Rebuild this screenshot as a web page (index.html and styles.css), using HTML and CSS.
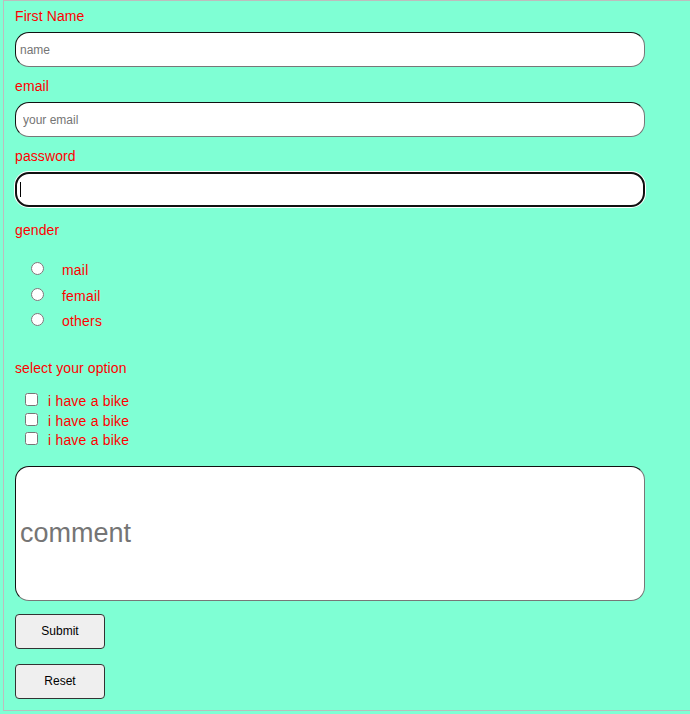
FILE: index.html
```html
<!DOCTYPE html>
<html lang="en">
<head>
<meta charset="utf-8">
<title>Form</title>
<link rel="stylesheet" href="styles.css">
</head>
<body>
<form class="form">
  <label class="field-label" for="fname">First Name</label>
  <input class="text-input pad-sm" id="fname" type="text" placeholder="name">

  <label class="field-label" for="email">email</label>
  <input class="text-input pad-md" id="email" type="email" placeholder="your email">

  <label class="field-label" for="pwd">password</label>
  <div class="focus-wrap">
    <input class="text-input text-input--focus" id="pwd" type="password">
    <span class="caret"></span>
  </div>

  <div class="group-label group-label--gender">gender</div>
  <div class="radio-list">
    <div class="radio-row"><input class="radio" type="radio" name="g" id="g1"><label class="opt-text opt-text--radio" for="g1">mail</label></div>
    <div class="radio-row"><input class="radio" type="radio" name="g" id="g2"><label class="opt-text opt-text--radio" for="g2">femail</label></div>
    <div class="radio-row"><input class="radio" type="radio" name="g" id="g3"><label class="opt-text opt-text--radio" for="g3">others</label></div>
  </div>

  <div class="group-label group-label--select">select your option</div>
  <div class="check-list">
    <div class="check-row"><input class="check" type="checkbox" id="c1"><label class="opt-text opt-text--check" for="c1">i have a bike</label></div>
    <div class="check-row"><input class="check" type="checkbox" id="c2"><label class="opt-text opt-text--check" for="c2">i have a bike</label></div>
    <div class="check-row"><input class="check" type="checkbox" id="c3"><label class="opt-text opt-text--check" for="c3">i have a bike</label></div>
  </div>

  <input class="comment" type="text" placeholder="comment">

  <button class="btn btn--submit" type="button">Submit</button>
  <button class="btn" type="button">Reset</button>
</form>
</body>
</html>
```
FILE: styles.css
```css
html, body {
  margin: 0;
  padding: 0;
  overflow: hidden;
  background: #7fffd4;
}

body {
  font-family: "Liberation Sans", Arial, sans-serif;
}

.form {
  margin-left: 3px;
  width: 700px;
  border: 1px solid #bdbdbd;
  padding: 7px 11px 11px;
  box-sizing: border-box;
}

.field-label,
.group-label {
  display: block;
  font-size: 14px;
  line-height: 16px;
  color: #ff0000;
  letter-spacing: 0.1px;
  margin-bottom: 8px;
}

.text-input {
  display: block;
  box-sizing: border-box;
  width: 630px;
  height: 35px;
  margin: 0 0 11px 0;
  border-width: 1px;
  border-style: solid;
  border-color: #111 #777 #777 #111;
  border-radius: 14px;
  background: #fff;
  font-family: "Liberation Sans", Arial, sans-serif;
  font-size: 12px;
  color: #000;
  outline: none;
}

.text-input::placeholder,
.comment::placeholder {
  color: #757575;
}

.pad-sm { padding: 0 4px; }
.pad-md { padding: 0 7px; }

.focus-wrap {
  position: relative;
  width: 630px;
}

.text-input--focus {
  border: 2px solid #101010;
  box-shadow: 0 0 0 1px #fff;
  padding: 0 4px;
  margin-bottom: 15px;
}

.caret {
  position: absolute;
  left: 5px;
  top: 10px;
  width: 1px;
  height: 15px;
  background: #000;
}

.group-label--gender {
  margin-bottom: 24px;
}

.group-label--select {
  margin-top: 21px;
  margin-bottom: 17px;
}

.radio-row {
  display: flex;
  align-items: flex-start;
  height: 25.7px;
}

.radio {
  width: 13px;
  height: 13px;
  margin: 0 0 0 16px;
  flex: none;
}

.opt-text {
  font-size: 14px;
  line-height: 16px;
  color: #ff0000;
  letter-spacing: 0.2px;
}

.opt-text--radio {
  margin-left: 18px;
}

.check-row {
  display: flex;
  align-items: flex-start;
  height: 19.5px;
}

.check {
  width: 13px;
  height: 13px;
  margin: 0 0 0 10px;
  flex: none;
}

.opt-text--check {
  margin-left: 10px;
}

.comment {
  display: block;
  box-sizing: border-box;
  width: 630px;
  height: 135px;
  margin: 14px 0 13px 0;
  padding: 0 4px;
  border-width: 1px;
  border-style: solid;
  border-color: #111 #777 #777 #111;
  border-radius: 14px;
  background: #fff;
  font-family: "Liberation Sans", Arial, sans-serif;
  font-size: 27px;
  outline: none;
}

.btn {
  display: block;
  box-sizing: border-box;
  width: 90px;
  height: 35px;
  margin: 0;
  padding: 0;
  background: #efefef;
  border: 1px solid #333;
  border-radius: 4px;
  font-family: "Liberation Sans", Arial, sans-serif;
  font-size: 12px;
  color: #000;
}

.btn--submit {
  margin-bottom: 15px;
}
```
